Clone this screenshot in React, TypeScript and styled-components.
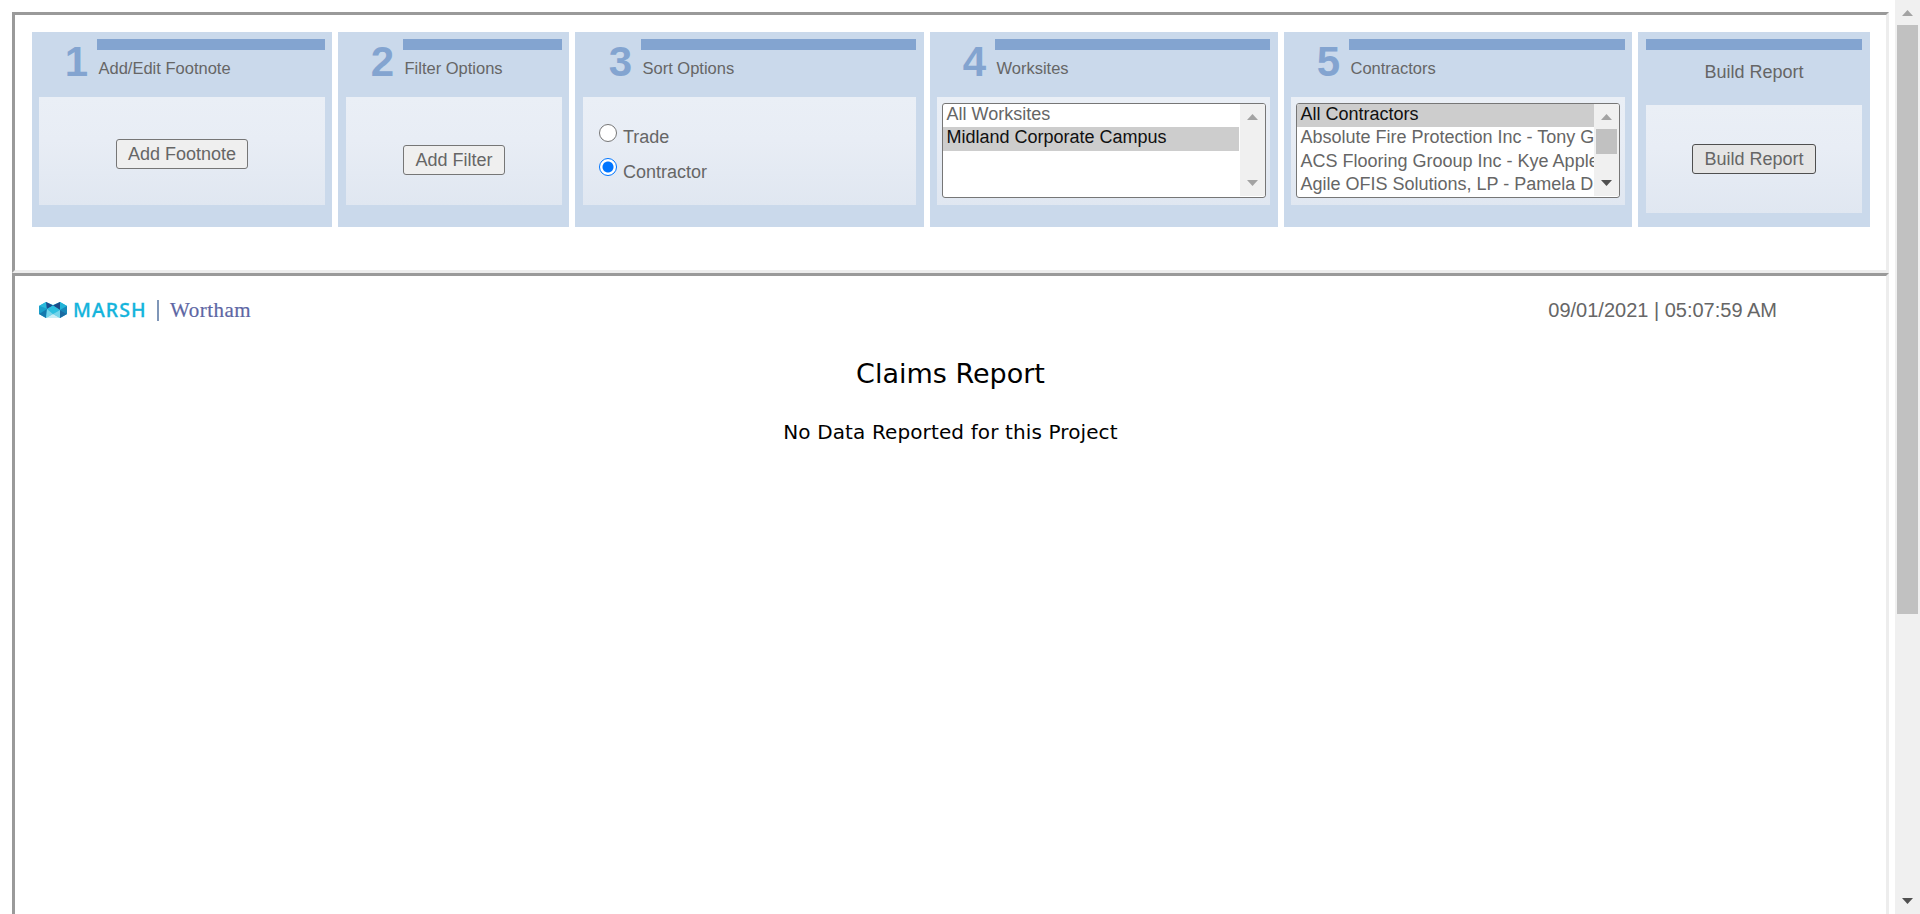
import React from 'react';
import styled, { createGlobalStyle } from 'styled-components';

const Global = createGlobalStyle`
  *, *::before, *::after { box-sizing: border-box; }
  html, body { margin: 0; padding: 0; background: #fff; overflow: hidden; }
  body { font-family: "Liberation Sans", Arial, sans-serif; font-size: 18px; color: #666; }
`;

const Page = styled.div`
  display: flex;
  width: 1920px;
  height: 914px;
  overflow: hidden;
`;

const Frames = styled.main`
  flex: 1;
  display: flex;
  flex-direction: column;
  padding: 12px 6px 0 12px;
  min-width: 0;
`;

const Frame = styled.section<{ $height: number }>`
  flex: none;
  height: ${(p) => p.$height}px;
  border: 3px solid;
  border-color: #9a9a9a #ededed #ededed #9a9a9a;
`;

const Steps = styled.div`
  display: flex;
  gap: 6px;
  padding: 17px 0 0 17px;
`;

const Card = styled.div<{ $width: number; $left: number; $right: number }>`
  width: ${(p) => p.$width}px;
  height: 195px;
  padding: 7px ${(p) => p.$right}px 0 ${(p) => p.$left}px;
  background: #cad9eb;
`;

const Head = styled.div`
  display: flex;
  height: 58px;
`;

const StepNumber = styled.div<{ $width: number }>`
  width: ${(p) => p.$width}px;
  padding-right: 9px;
  text-align: right;
  font-weight: bold;
  font-size: 42px;
  line-height: 45px;
  color: #83a4d0;
`;

const HeadMain = styled.div`
  flex: 1;
`;

const Bar = styled.div`
  height: 11px;
  background: #83a4d0;
`;

const StepTitle = styled.div`
  padding: 8px 0 0 1.5px;
  font-size: 16.5px;
  line-height: 20px;
`;

const BuildTitle = styled.div`
  height: 55px;
  padding-top: 11px;
  text-align: center;
  line-height: 22px;
`;

const Body = styled.div<{ $top?: number; $start?: number }>`
  display: flex;
  flex-direction: column;
  align-items: ${(p) => (p.$start ? 'flex-start' : 'center')};
  height: 108px;
  padding: ${(p) => p.$top ?? 0}px 0 0 ${(p) => p.$start ?? 0}px;
  background: linear-gradient(#eaeff6, #e8edf5 40%, #e0e7f1);
`;

const Button = styled.button<{ $width: number; $hovered?: boolean }>`
  width: ${(p) => p.$width}px;
  height: 30px;
  padding: 0;
  border: 1px solid ${(p) => (p.$hovered ? '#4f4f4f' : '#767676')};
  border-radius: 3px;
  background: ${(p) => (p.$hovered ? '#e5e5e5' : '#efefef')};
  color: #666;
  font: 18px/28px "Liberation Sans", Arial, sans-serif;
`;

const Choice = styled.label`
  display: flex;
  gap: 6px;
  height: 34px;
`;

const Radio = styled.span<{ $on?: boolean }>`
  width: 18px;
  height: 18px;
  border: ${(p) => (p.$on ? '1.5px solid #0075ff' : '1.5px solid #767676')};
  border-radius: 50%;
  background: ${(p) => (p.$on ? 'radial-gradient(circle, #0075ff 5px, #fff 6px)' : '#fff')};
`;

const ChoiceText = styled.span<{ $drop: number }>`
  padding-top: ${(p) => p.$drop}px;
  line-height: 20px;
`;

const ListBox = styled.div`
  display: flex;
  width: 324px;
  height: 95px;
  border: 1px solid #767676;
  border-radius: 3px;
  background: #fff;
  overflow: hidden;
`;

const Options = styled.div<{ $inset?: number }>`
  flex: 1;
  min-width: 0;
  margin-right: ${(p) => p.$inset ?? 0}px;
`;

const Option = styled.div<{ $selected?: boolean }>`
  height: 23.33px;
  padding-left: 3.5px;
  overflow: hidden;
  white-space: nowrap;
  line-height: 20px;
  color: ${(p) => (p.$selected ? '#101010' : '#666')};
  background: ${(p) => (p.$selected ? '#cdcdcd' : 'transparent')};
`;

const Track = styled.div<{ $height: number; $pad: number; $padEnd: number }>`
  flex: none;
  display: flex;
  flex-direction: column;
  align-items: center;
  width: 25px;
  height: ${(p) => p.$height}px;
  padding: ${(p) => p.$pad}px 0 ${(p) => p.$padEnd}px;
  background: #f0f0f0;
`;

const Thumb = styled.div<{ $height: number }>`
  width: 21px;
  height: ${(p) => p.$height}px;
  margin-top: 9px;
  background: #c1c1c1;
`;

const Arrow = styled.span<{ $down?: boolean; $active?: boolean }>`
  flex: none;
  width: 11px;
  height: 6px;
  margin-top: ${(p) => (p.$down ? 'auto' : '0')};
  background: ${(p) => (p.$active ? '#505050' : '#a3a3a3')};
  clip-path: ${(p) => (p.$down ? 'polygon(0 0, 100% 0, 50% 100%)' : 'polygon(0 100%, 100% 100%, 50% 0)')};
`;

const ReportHead = styled.header`
  display: flex;
  justify-content: space-between;
  height: 44px;
  padding: 22px 109px 0 24px;
`;

const Brand = styled.div`
  display: flex;
  height: 24px;
`;

const BrandMark = styled.svg`
  width: 28px;
  height: 16px;
  margin-top: 4px;
`;

const Marsh = styled.span`
  width: 83px;
  padding-left: 6px;
  font: 500 19.5px/24px "Noto Sans", sans-serif;
  letter-spacing: 1.1px;
  color: #14b4dc;
  -webkit-text-stroke: 0.3px #14b4dc;
`;

const BrandRule = styled.span`
  width: 2px;
  height: 21px;
  margin: 2px 11px 0 7px;
  background: #7f96b8;
`;

const Wortham = styled.span`
  font: 21px/24px "Liberation Serif", serif;
  letter-spacing: 0.5px;
  color: #5d66a4;
  -webkit-text-stroke: 0.2px #5d66a4;
`;

const Stamp = styled.time`
  font-size: 20px;
  line-height: 24px;
`;

const ReportText = styled.div`
  display: flex;
  flex-direction: column;
  align-items: center;
  font-family: "DejaVu Sans", Verdana, sans-serif;
  color: #000;
`;

const ReportTitle = styled.h1`
  margin: 36px 0 0;
  font-size: 27px;
  line-height: 36px;
  font-weight: normal;
`;

const ReportNote = styled.p`
  margin: 26px 0 0;
  font-size: 20px;
  line-height: 28px;
  letter-spacing: 0.12px;
`;

type StepProps = {
  number: number;
  title: string;
  width: number;
  left?: number;
  right?: number;
  top?: number;
  start?: number;
  children: React.ReactNode;
};

const Step = ({ number, title, width, left = 7, right = 8, top, start, children }: StepProps) => (
  <Card $width={width} $left={left} $right={right}>
    <Head>
      <StepNumber $width={left === 8 && right === 7 ? 57 : 58}>{number}</StepNumber>
      <HeadMain>
        <Bar />
        <StepTitle>{title}</StepTitle>
      </HeadMain>
    </Head>
    <Body $top={top} $start={start}>{children}</Body>
  </Card>
);

const contractors = [
  'All Contractors',
  'Absolute Fire Protection Inc - Tony G',
  'ACS Flooring Grooup Inc - Kye Apple',
  'Agile OFIS Solutions, LP - Pamela D',
];

export default function App() {
  return (
    <>
      <Global />
      <Page>
        <Frames>
          <Frame $height={261}>
            <Steps>
              <Step number={1} title="Add/Edit Footnote" width={300} right={7} top={42}>
                <Button $width={132}>Add Footnote</Button>
              </Step>
              <Step number={2} title="Filter Options" width={231} left={8} right={7} top={48}>
                <Button $width={102}>Add Filter</Button>
              </Step>
              <Step number={3} title="Sort Options" width={349} left={8} top={27} start={16}>
                <Choice>
                  <Radio />
                  <ChoiceText $drop={3}>Trade</ChoiceText>
                </Choice>
                <Choice>
                  <Radio $on />
                  <ChoiceText $drop={4}>Contractor</ChoiceText>
                </Choice>
              </Step>
              <Step number={4} title="Worksites" width={348} top={6} start={5}>
                <ListBox>
                  <Options $inset={1}>
                    <Option>All Worksites</Option>
                    <Option $selected>Midland Corporate Campus</Option>
                  </Options>
                  <Track $height={92} $pad={10} $padEnd={10}>
                    <Arrow />
                    <Arrow $down />
                  </Track>
                </ListBox>
              </Step>
              <Step number={5} title="Contractors" width={348} right={7} top={6} start={5}>
                <ListBox>
                  <Options>
                    {contractors.map((name, i) => (
                      <Option key={name} $selected={i === 0}>{name}</Option>
                    ))}
                  </Options>
                  <Track $height={92} $pad={10} $padEnd={10}>
                    <Arrow />
                    <Thumb $height={25} />
                    <Arrow $down $active />
                  </Track>
                </ListBox>
              </Step>
              <Card $width={232} $left={8} $right={8}>
                <Bar />
                <BuildTitle>Build Report</BuildTitle>
                <Body $top={39}>
                  <Button $width={124} $hovered>Build Report</Button>
                </Body>
              </Card>
            </Steps>
          </Frame>
          <Frame $height={900}>
            <ReportHead>
              <Brand>
                <BrandMark viewBox="0 0 28 16">
                  <path d="M0 4 7 0 14 3 21 0 28 4V12L21 16H7L0 12Z" fill="#1fa9d3" />
                  <path d="M0 4 7 0V6Z" fill="#2bbbdc" />
                  <path d="M7 0 14 3.500 8 7Z" fill="#1c4f8f" />
                  <path d="M21 0 28 4 21 8Z" fill="#22b4d8" />
                  <path d="M21 0 14 3.500 21 8Z" fill="#1c4a86" />
                  <path d="M0 4 8 7 0 12Z" fill="#1a9fca" />
                  <path d="M0 12 8 7 7 16Z" fill="#1579ad" />
                  <path d="M8 7 14 3.500 21 8 14 12Z" fill="#2cc0e0" />
                  <path d="M7 16 8 7 14 12Z M14 12 21 8V16Z" fill="#74d5ea" />
                  <path d="M7 16 14 12 21 16Z" fill="#c9eef6" />
                  <path d="M21 8 28 4V12Z" fill="#1787b8" />
                  <path d="M21 8 28 12 21 16Z" fill="#1b6ba2" />
                </BrandMark>
                <Marsh>MARSH</Marsh>
                <BrandRule />
                <Wortham>Wortham</Wortham>
              </Brand>
              <Stamp>09/01/2021 | 05:07:59 AM</Stamp>
            </ReportHead>
            <ReportText>
              <ReportTitle>Claims Report</ReportTitle>
              <ReportNote>No Data Reported for this Project</ReportNote>
            </ReportText>
          </Frame>
        </Frames>
        <Track as="aside" $height={914} $pad={10} $padEnd={10}>
          <Arrow />
          <Thumb $height={589} />
          <Arrow $down $active />
        </Track>
      </Page>
    </>
  );
}
